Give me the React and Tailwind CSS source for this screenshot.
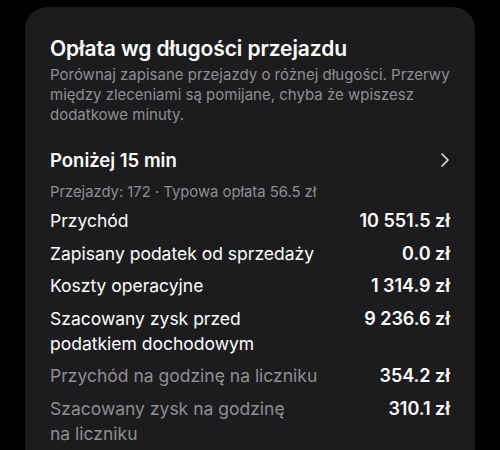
const rows = [
  { label: ["Przychód"], value: "10 551.5 zł" },
  { label: ["Zapisany podatek od sprzedaży"], value: "0.0 zł" },
  { label: ["Koszty operacyjne"], value: "1 314.9 zł" },
  { label: ["Szacowany zysk przed", "podatkiem dochodowym"], value: "9 236.6 zł" },
  { label: ["Przychód na godzinę na liczniku"], value: "354.2 zł", muted: true },
  { label: ["Szacowany zysk na godzinę", "na liczniku"], value: "310.1 zł", muted: true },
]

function Chevron() {
  return (
    <svg width="8" height="14" viewBox="0 0 8 14" fill="none" className="shrink-0">
      <path d="M1 1L7 7L1 13" stroke="#e5e5e7" strokeWidth="1.6" strokeLinecap="round" strokeLinejoin="round" />
    </svg>
  )
}

export default function App() {
  return (
    <div className="min-h-[450px] bg-black pt-[7px] px-[25px] font-['Inter',sans-serif] antialiased">
      <div className="bg-[#1c1c1e] rounded-[22px] px-[25px] pt-[28px] pb-8">
        {/* Heading */}
        <h2 className="text-[21px] leading-[28px] font-semibold text-white tracking-[-0.1px]">
          Opłata wg długości przejazdu
        </h2>
        <p className="mt-[2px] text-[15px] leading-[20px] text-[#8e8e93]">
          Porównaj zapisane przejazdy o różnej długości. Przerwy między zleceniami są pomijane, chyba że wpiszesz dodatkowe minuty.
        </p>

        {/* Bucket */}
        <div className="mt-[23px]">
          <div className="flex items-center justify-between">
            <span className="text-[18.5px] leading-[24px] font-semibold text-white">Poniżej 15 min</span>
            <span className="pr-[1px]"><Chevron /></span>
          </div>
          <p className="mt-[10px] text-[14.8px] leading-[20px] text-[#8e8e93]">
            Przejazdy: 172 · Typowa opłata 56.5 zł
          </p>

          <div className="mt-[6px] flex flex-col gap-[7.5px]">
            {rows.map((r) => (
              <div key={r.label[0]} className="flex items-start justify-between gap-6">
                <span className={`text-[17.5px] leading-[25px] ${r.muted ? "text-[#8e8e93]" : "text-white"}`}>
                  {r.label.map((line, i) => (
                    <span key={i} className="block">{line}</span>
                  ))}
                </span>
                <span className="text-[18px] leading-[25px] font-semibold text-white whitespace-nowrap">
                  {r.value}
                </span>
              </div>
            ))}
          </div>
        </div>
      </div>
    </div>
  )
}
